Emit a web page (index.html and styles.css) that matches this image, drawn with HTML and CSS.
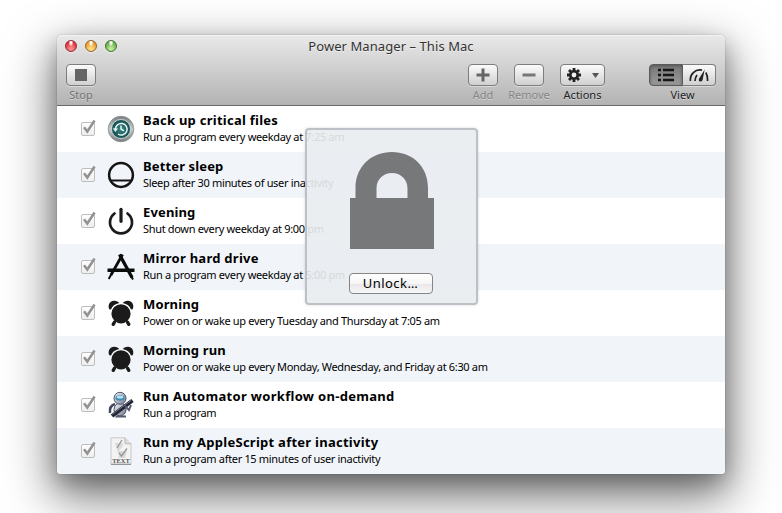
FILE: index.html
```html
<!DOCTYPE html>
<html lang="en">
<head>
<meta charset="utf-8">
<title>Power Manager – This Mac</title>
<link rel="stylesheet" href="styles.css">
</head>
<body>
<svg class="defs" aria-hidden="true">
  <defs>
    <linearGradient id="box" x2="0" y2="1"><stop stop-color="#fff"/><stop offset="1" stop-color="#eee"/></linearGradient>
    <linearGradient id="ring" x2="0" y2="1"><stop stop-color="#777d80"/><stop offset=".5" stop-color="#c6cacc"/><stop offset="1" stop-color="#777d80"/></linearGradient>
    <radialGradient id="teal"><stop stop-color="#3a8583"/><stop offset="1" stop-color="#144b4e"/></radialGradient>
    <linearGradient id="robot" x2="1" y2="1"><stop stop-color="#f4f6fa"/><stop offset="1" stop-color="#737a90"/></linearGradient>
    <symbol id="check" viewBox="0 0 16 18">
      <rect x="1.5" y="4.5" width="13" height="13" rx="1.5" fill="url(#box)" stroke="#bdbdbd"/>
      <path d="M4 9.2 7.3 13.5 14.6 2.500" fill="none" stroke="#929292" stroke-width="2.500"/>
    </symbol>
    <symbol id="alarm" viewBox="0 0 28 28">
      <g fill="#1b1b1b"><circle cx="14" cy="14.8" r="9.6"/>
      <path d="M2.3 10.3C.2 5.500 3.500 1.300 7.500 1.700c2 .2 4 1.200 4.800 2.400C8 5 5 7.200 4 10.500zM25.700 10.300C27.800 5.500 24.500 1.300 20.500 1.700c-2 .2-4 1.200-4.800 2.400C20 5 23 7.200 24 10.500z"/></g>
      <path d="M7.500 23.200 6.200 25.300M20.500 23.200l1.300 2.100" stroke="#1b1b1b" stroke-width="3.400" stroke-linecap="round"/>
    </symbol>
  </defs>
</svg>
<main class="window">
  <header class="chrome">
    <div class="titlebar">
      <div class="lights"><i class="red"></i><i class="amber"></i><i class="green"></i></div>
      <h1>Power Manager – This Mac</h1>
    </div>
    <div class="toolbar">
      <div class="tool stop disabled"><button><svg width="12" height="12"><path fill="#656565" d="M0 0h12v12H0z"/></svg></button><span>Stop</span></div>
      <div class="tool add disabled"><button><svg width="14" height="14"><path stroke="#666" stroke-width="3" d="M7 .5v13M.5 7h13"/></svg></button><span>Add</span></div>
      <div class="tool remove disabled"><button><svg width="14" height="4"><path fill="#777" d="M.5.5h13v3H.5z"/></svg></button><span>Remove</span></div>
      <div class="tool actions"><button><svg width="34" height="16" viewBox="0 0 34 16"><g stroke="#222" stroke-width="2.800"><path d="M8 1v14M1 8h14M3 3l10 10M13 3 3 13"/></g><circle cx="8" cy="8" r="3.700" fill="#eee" stroke="#222" stroke-width="2.600"/><path fill="#555" d="M26 6h7l-3.500 5z"/></svg></button><span>Actions</span></div>
      <div class="tool view"><div class="segments"><button class="on"><svg width="18" height="14"><path stroke="#161616" stroke-width="2.400" d="M1 2h3M6 2h11M1 7h3M6 7h11M1 12h3M6 12h11"/></svg></button><button><svg width="20" height="14" viewBox="0 0 20 14"><path fill="none" stroke="#222" stroke-width="1.700" d="M1.500 13A9.500 9.500 0 0 1 13 2.200M16.800 4.500q2 3.500 1.700 8.500M6 13q0-3.500 2-6"/><path fill="#222" d="m15.700 1.500-2.200 10.800q-1.500 2-3.300.7-.8-1.500.1-2.800z"/></svg></button></div><span>View</span></div>
    </div>
  </header>
  <ul class="list">
    <li><svg class="check"><use href="#check"/></svg>
      <svg class="icon" viewBox="0 0 28 28"><circle cx="14" cy="14" r="12.800" fill="url(#ring)" stroke="#858b8e" stroke-width=".8"/><circle cx="14" cy="14" r="9.500" fill="url(#teal)" stroke="#e4e8e8" stroke-width=".8"/><path d="M8.500 14.500A5.800 5.800 0 1 1 11 19M14 10.500V14l3 1.800" fill="none" stroke="#e1f5f2" stroke-width="1.500"/><path d="m5.700 13.300 5.400.2-2.800 3.400z" fill="#e1f5f2"/></svg>
      <div><h2 class="t1">Back up critical files</h2><p>Run a program every weekday at 7:25 am</p></div></li>
    <li><svg class="check"><use href="#check"/></svg>
      <svg class="icon" viewBox="0 0 28 28"><g fill="none" stroke="#141414"><circle cx="14" cy="14" r="11.900" stroke-width="2.500"/><path d="M4 19.500h20" stroke-width="2.200"/></g></svg>
      <div><h2 class="t2">Better sleep</h2><p>Sleep after 30 minutes of user inactivity</p></div></li>
    <li><svg class="check"><use href="#check"/></svg>
      <svg class="icon" viewBox="0 0 28 28"><g fill="none" stroke="#1b1b1b" stroke-linecap="round"><path d="M7.500 6.500a11 11 0 1 0 13 0" stroke-width="2.700"/><path d="M14 2.300v12" stroke-width="3.200"/></g></svg>
      <div><h2 class="t3">Evening</h2><p>Shut down every weekday at 9:00 pm</p></div></li>
    <li><svg class="check"><use href="#check"/></svg>
      <svg class="icon" viewBox="0 0 28 28"><path d="M.5 15.500h27v3.500H.5z" fill="#0b0b0b"/><g fill="none" stroke="#0b0b0b"><path d="M15.500 1.500 4 22" stroke-width="2.800"/><path d="m12.500 1.500 12.500 23" stroke-width="3.300"/><path d="m4.500 21-2.800 5" stroke-width="2"/><path d="m24 23 2 3.500" stroke-width="2"/></g></svg>
      <div><h2 class="t4">Mirror hard drive</h2><p>Run a program every weekday at 5:00 pm</p></div></li>
    <li><svg class="check"><use href="#check"/></svg><svg class="icon"><use href="#alarm"/></svg>
      <div><h2 class="t5">Morning</h2><p>Power on or wake up every Tuesday and Thursday at 7:05 am</p></div></li>
    <li><svg class="check"><use href="#check"/></svg><svg class="icon"><use href="#alarm"/></svg>
      <div><h2 class="t6">Morning run</h2><p>Power on or wake up every Monday, Wednesday, and Friday at 6:30 am</p></div></li>
    <li><svg class="check"><use href="#check"/></svg>
      <svg class="icon" viewBox="0 0 28 28"><path d="M8 13q-6 2-5 9" fill="none" stroke="#40485c" stroke-width="2.500"/><ellipse cx="13" cy="18.500" rx="6" ry="6.500" fill="url(#robot)" stroke="#454d61"/><path d="M9 24.500h10v2H8z" fill="#545b6d"/><circle cx="13" cy="7.300" r="6" fill="url(#robot)" stroke="#4b5367"/><ellipse cx="13" cy="7" rx="4.700" ry="2.700" fill="#438bb5"/><ellipse cx="13" cy="6.200" rx="3.300" ry="1.400" fill="#b5e6f4"/><path d="M5 25 25.500 9.500" stroke="#242633" stroke-width="4"/><path d="m5 23.500 19-14" stroke="#70758c"/><path d="m18 15 4 4 2-5" fill="none" stroke="#555c70" stroke-width="2"/></svg>
      <div><h2 class="t7">Run Automator workflow on-demand</h2><p>Run a program</p></div></li>
    <li><svg class="check"><use href="#check"/></svg>
      <svg class="icon" viewBox="0 0 28 28"><path d="M4 .8h14l6 6v20.400H4z" fill="#f3f3f3" stroke="#c8c8c8"/><path d="M18 .8v6h6" fill="#ddd" stroke="#b8b8b8"/><path d="M8 6h7q2 2 0 4l-3 4h8l-2 7h-7q2-3 0-5z" fill="#dadada"/><path d="m10 11 5-8M12 16l2.500 3L20 11.500" fill="none" stroke="#999" stroke-width="1.400"/><path d="M4 27.300h20" stroke="#888"/><text x="14" y="26" text-anchor="middle" class="filetype">TEXT</text></svg>
      <div><h2 class="t8">Run my AppleScript after inactivity</h2><p>Run a program after 15 minutes of user inactivity</p></div></li>
  </ul>
  <section class="lock">
    <svg width="84" height="97" viewBox="0 0 84 97"><path fill="#77787a" fill-rule="evenodd" d="M0 46h5.500V36C5.500 14 22 0 42 0s36 14 36 36v10h6v51H0zM26.500 46h31V36.500C57.500 27 50.500 21 42 21s-15.500 6-15.500 15.500z"/></svg>
    <button>Unlock…</button>
  </section>
</main>
</body>
</html>
```
FILE: styles.css
```css
* { box-sizing: border-box; }
body { margin: 0; width: 782px; height: 513px; overflow: hidden; background: #fff; padding: 35px 57px; font-family: "Noto Sans", sans-serif; }
.defs { position: absolute; width: 0; height: 0; }
h1, h2, p, ul { margin: 0; padding: 0; }
button { display: flex; align-items: center; justify-content: center; padding: 0; font: inherit; }
.window { position: relative; width: 668px; height: 439px; border-radius: 5px 5px 4px 4px; box-shadow: 0 0 1px rgba(0,0,0,.65), 0 19px 48px 4px rgba(0,0,0,.55), 0 8px 20px rgba(0,0,0,.22); }
.chrome { height: 71px; border-radius: 5px 5px 0 0; border-bottom: 1px solid #6a6a6a; background: linear-gradient(#e9e9e9, #b3b3b3); box-shadow: inset 0 1px #f4f4f4; }
.titlebar { display: grid; height: 23px; }
.titlebar > * { grid-area: 1 / 1; }
.lights { display: flex; gap: 8px; padding: 5px 8px; }
.lights i { width: 12px; height: 12px; border-radius: 50%; border: 1px solid; box-shadow: 0 1px rgba(255,255,255,.5); }
.red { background: radial-gradient(ellipse at 50% 15%, #fff 0 10%, transparent 35%), radial-gradient(circle at 50% 80%, #ff9b98, #e2303b 70%); border-color: #8c3037 !important; }
.amber { background: radial-gradient(ellipse at 50% 15%, #fff 0 10%, transparent 35%), radial-gradient(circle at 50% 80%, #ffe892, #e99a2e 70%); border-color: #93652a !important; }
.green { background: radial-gradient(ellipse at 50% 15%, #fff 0 10%, transparent 35%), radial-gradient(circle at 50% 80%, #ccf5a3, #65ad49 70%); border-color: #45712f !important; }
h1 { justify-self: center; font-size: 13px; line-height: 23px; font-weight: 400; letter-spacing: .07px; color: #333; text-shadow: 0 1px rgba(255,255,255,.5); }
.toolbar { display: flex; padding: 6px 9px 0; }
.tool { display: flex; flex-direction: column; align-items: center; font-size: 11px; line-height: 15px; color: #222; text-shadow: 0 1px rgba(255,255,255,.4); }
.tool > span { margin-top: 1px; }
.tool button { width: 30px; height: 22px; border: 1px solid #7d7d7d; border-radius: 4px; background: linear-gradient(#fbfbfb, #d0d0d0); box-shadow: 0 1px rgba(255,255,255,.4); }
.disabled { color: #858585; }
.stop { width: 30px; color: #737373; }
.add { width: 30px; margin-left: 372px; }
.remove { width: 44px; margin-left: 9px; }
.actions { width: 45px; margin-left: 9px; }
.actions button { width: 45px; }
.view { width: 67px; margin-left: 44px; }
.segments { display: flex; }
.segments button { width: 33px; border-radius: 0 4px 4px 0; border-left: 0; }
.segments .on { width: 34px; border: 1px solid #5b5b5b; border-radius: 4px 0 0 4px; background: linear-gradient(#777, #999); box-shadow: inset 0 1px 3px #555; }
.list { list-style: none; overflow: hidden; border-radius: 0 0 4px 4px; background: #fff; }
.list li { height: 46px; display: flex; padding-left: 23px; }
.list li:nth-child(even) { background: #f1f5fa; }
.check { width: 16px; height: 18px; margin-top: 12px; }
.icon { width: 28px; height: 28px; margin: 9px 8px 0 11px; }
.list div { padding-top: 5px; white-space: nowrap; color: #000; }
h2 { font-size: 13px; line-height: 18px; font-weight: 700; letter-spacing: .26px; }
h2.t2, h2.t3, h2.t5, h2.t6 { letter-spacing: .14px; }
h2.t7 { letter-spacing: .31px; }
p { font-size: 11px; line-height: 15px; letter-spacing: -.33px; }
.filetype { font: 700 6.5px "Liberation Serif", serif; fill: #555; }
.lock { position: absolute; left: 248px; top: 93px; width: 173px; height: 177px; display: flex; flex-direction: column; align-items: center; padding-top: 22px; border: 2px solid rgba(178,183,189,.8); border-radius: 4px; background: rgba(233,236,240,.91); box-shadow: 0 0 3px rgba(0,0,0,.15); }
.lock button { width: 84px; height: 21px; margin: 24px 2px 0 0; padding-bottom: 1px; border: 1px solid #858585; border-radius: 4px; background: linear-gradient(#fff, #f6f6f6 50%, #e9e7e8 52%, #f7f7f7); font-size: 13px; letter-spacing: .45px; color: #000; }
```
